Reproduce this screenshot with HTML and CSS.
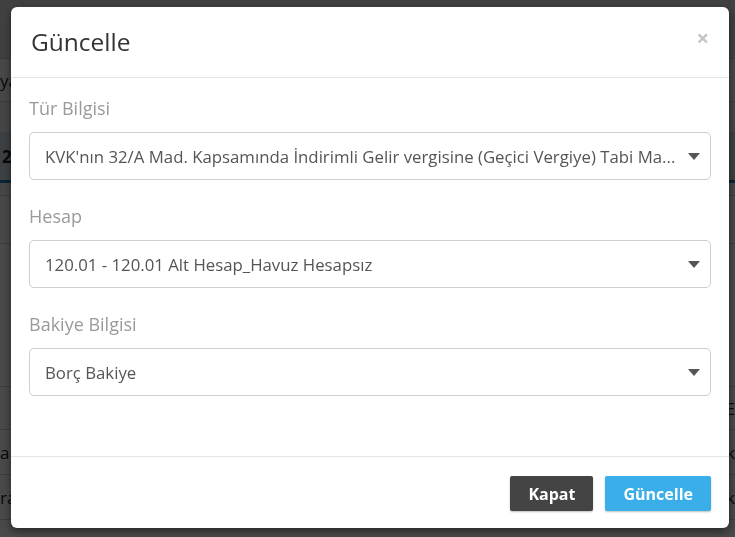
FILE: index.html
```html
<!DOCTYPE html>
<html lang="tr">
<head>
<meta charset="utf-8">
<title>Güncelle</title>
<link rel="stylesheet" href="styles.css">
</head>
<body>
<div class="page">
  <div class="page-top"></div>
  <div class="row row-a"><span class="cell-l">ya</span><span class="cell-r"></span></div>
  <div class="row row-b"></div>
  <div class="row tabs"><span class="cell-l tab-text">2</span></div>
  <div class="row row-c"></div>
  <div class="row row-d"></div>
  <div class="row row-e"></div>
  <div class="row row-f"><span class="cell-l"></span><span class="cell-r">E</span></div>
  <div class="row row-g"><span class="cell-l">a</span><span class="cell-r">k</span></div>
  <div class="row row-g"><span class="cell-l">ra</span><span class="cell-r">k</span></div>
  <div class="row row-h"></div>
</div>

<div class="overlay">
  <div class="modal">
    <div class="modal-header">
      <h4 class="modal-title">Güncelle</h4>
      <span class="close">×</span>
    </div>
    <div class="modal-body">
      <div class="group">
        <div class="label">Tür Bilgisi</div>
        <div class="select">
          <span class="select-text">KVK'nın 32/A Mad. Kapsamında İndirimli Gelir vergisine (Geçici Vergiye) Tabi Ma...</span>
          <svg class="caret" width="12" height="7" viewBox="0 0 12 7"><path d="M0 0h12L6 7z" fill="#555"/></svg>
        </div>
      </div>
      <div class="group">
        <div class="label">Hesap</div>
        <div class="select">
          <span class="select-text">120.01 - 120.01 Alt Hesap_Havuz Hesapsız</span>
          <svg class="caret" width="12" height="7" viewBox="0 0 12 7"><path d="M0 0h12L6 7z" fill="#555"/></svg>
        </div>
      </div>
      <div class="group">
        <div class="label">Bakiye Bilgisi</div>
        <div class="select">
          <span class="select-text">Borç Bakiye</span>
          <svg class="caret" width="12" height="7" viewBox="0 0 12 7"><path d="M0 0h12L6 7z" fill="#555"/></svg>
        </div>
      </div>
    </div>
    <div class="modal-footer">
      <button class="btn btn-dark">Kapat</button>
      <button class="btn btn-blue">Güncelle</button>
    </div>
  </div>
</div>
</body>
</html>
```

FILE: styles.css
```css
html, body {
  margin: 0;
  padding: 0;
}
body {
  font-family: "Open Sans", "Liberation Sans", sans-serif;
  width: 735px;
  height: 537px;
  overflow: hidden;
  background: #f2f2f2;
}

/* underlying page (seen through overlay) */
.page {
  display: flex;
  flex-direction: column;
}
.page-top {
  height: 58px;
  background: #d8d8d8;
  border-bottom: 1px solid #bdbdbd;
}
.row {
  display: flex;
  justify-content: space-between;
  align-items: center;
  border-bottom: 1px solid #c8c8c8;
  font-size: 17px;
  color: #222;
  background: #f4f4f4;
}
.cell-l { padding-left: 0; }
.cell-r { padding-right: 0; }
.row-a { height: 42px; background: #efefef; }
.row-b { height: 30px; background: #e8e8e8; border-bottom: none; }
.tabs {
  height: 48px;
  background: #c9d8e2;
  border-bottom: 3px solid #1f7ab0;
}
.tab-text { font-weight: 700; color: #123; padding-left: 2px; }
.row-c { height: 12px; background: #ececec; }
.row-d { height: 47px; background: #f2f2f2; }
.row-e { height: 142px; background: #f4f4f4; }
.row-f { height: 42px; }
.row-g { height: 44px; }
.row-h { height: 30px; }

/* overlay & modal */
.overlay {
  position: fixed;
  inset: 0;
  background: rgba(0, 0, 0, 0.7);
}
.modal {
  margin: 7px 6px 0 11px;
  background: #fff;
  border-radius: 6px;
  display: flex;
  flex-direction: column;
  box-shadow: 0 3px 9px rgba(0, 0, 0, 0.5);
}
.modal-header {
  height: 71px;
  box-sizing: border-box;
  padding: 0 20px 0 20px;
  display: flex;
  align-items: center;
  justify-content: space-between;
  border-bottom: 1px solid #e5e5e5;
}
.modal-title {
  margin: 0;
  font-size: 24.5px;
  font-weight: 500;
  color: #333;
  line-height: 30px;
}
.close {
  font-size: 22px;
  font-weight: 700;
  color: #c4c4c4;
  line-height: 20px;
  margin-top: -10px;
}
.modal-body {
  padding: 18px 18px 60px;
  display: flex;
  flex-direction: column;
  gap: 24px;
}
.group {
  display: flex;
  flex-direction: column;
  gap: 12px;
}
.label {
  font-size: 18px;
  line-height: 24px;
  color: #9a9a9a;
}
.select {
  height: 48px;
  box-sizing: border-box;
  border: 1px solid #cfcfcf;
  border-radius: 5px;
  padding: 0 10px 0 15px;
  display: flex;
  align-items: center;
  justify-content: space-between;
  gap: 10px;
}
.select-text {
  font-size: 16.8px;
  color: #555;
  white-space: nowrap;
  overflow: hidden;
}
.caret { flex: none; }
.modal-footer {
  border-top: 1px solid #e5e5e5;
  padding: 19px 18px 17px;
  display: flex;
  justify-content: flex-end;
  gap: 12px;
}
.btn {
  height: 35px;
  border: none;
  border-radius: 2px;
  font-family: "Open Sans", "Liberation Sans", sans-serif;
  font-size: 16px;
  font-weight: 700;
  color: #fff;
  padding: 0 18px;
  box-shadow: 0 1px 2px rgba(0, 0, 0, 0.25);
}
.btn-dark { background: #444; }
.btn-blue { background: #3aaee8; }
```
